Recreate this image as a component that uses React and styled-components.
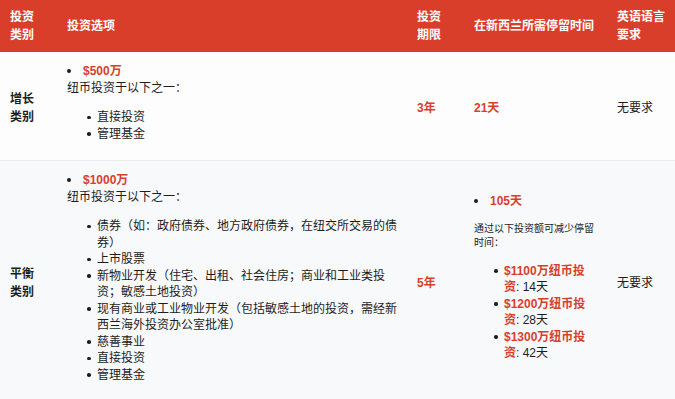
import React from "react";
import styled, { createGlobalStyle } from "styled-components";

const GlobalStyle = createGlobalStyle`
  body {
    margin: 0;
    background: #ffffff;
    font-family: "Liberation Sans", "Noto Sans CJK SC", sans-serif;
    color: #1d1d1d;
    text-spacing-trim: space-all;
  }
`;

const Table = styled.table`
  width: 675px;
  border-collapse: separate;
  border-spacing: 0;
  table-layout: fixed;
  font-size: 12px;
`;

const Th = styled.th`
  background-color: #d93e2b;
  color: #ffffff;
  font-weight: 700;
  text-align: left;
  vertical-align: middle;
  line-height: 18px;
  padding: 8px ${(p) => p.$right || 10}px 8px 10px;
`;

const Row = styled.tr`
  background-color: ${(p) => (p.$shaded ? "#f8f9fa" : "#fdfdfd")};
`;

const Td = styled.td`
  vertical-align: middle;
  line-height: 16.5px;
  padding: 11px ${(p) => p.$right || 10}px 7px 10px;
  border-top: ${(p) => (p.$divided ? "1px solid #ebebeb" : "none")};
`;

const Label = styled.div`
  font-weight: 700;
  line-height: 18px;
`;

const Red = styled.span`
  color: #d93f2b;
  font-weight: 700;
`;

const Lead = styled.div`
  position: relative;
  padding-left: 16px;
  &::before {
    content: "";
    position: absolute;
    left: 0;
    top: 6px;
    width: 4px;
    height: 4px;
    border-radius: 50%;
    background: #1d1d1d;
  }
`;

const Intro = styled.div``;

const Note = styled.p`
  margin: 12px 0;
  font-size: 10px;
  line-height: 14px;
`;

const SubList = styled.ul`
  list-style: none;
  margin: 13px 0 11px;
  padding: 0 0 0 30px;
`;

const SubItem = styled.li`
  position: relative;
  &::before {
    content: "";
    position: absolute;
    left: -10px;
    top: 6.5px;
    width: 3.5px;
    height: 3.5px;
    border-radius: 50%;
    background: #1d1d1d;
  }
`;

const growthOptions = ["直接投资", "管理基金"];

const balancedOptions = [
  "债券（如：政府债券、地方政府债券，在纽交所交易的债券）",
  "上市股票",
  "新物业开发（住宅、出租、社会住房；商业和工业类投资；敏感土地投资）",
  "现有商业或工业物业开发（包括敏感土地的投资，需经新西兰海外投资办公室批准）",
  "慈善事业",
  "直接投资",
  "管理基金",
];

const reductions = [
  { amount: "$1100万纽币投资", days: "14天" },
  { amount: "$1200万纽币投资", days: "28天" },
  { amount: "$1300万纽币投资", days: "42天" },
];

export default function App() {
  return (
    <>
      <GlobalStyle />
      <Table>
        <colgroup>
          <col style={{ width: 57 }} />
          <col style={{ width: 350 }} />
          <col style={{ width: 57 }} />
          <col style={{ width: 143 }} />
          <col style={{ width: 68 }} />
        </colgroup>
        <thead>
          <tr>
            <Th $right={18}>投资类别</Th>
            <Th $right={8}>投资选项</Th>
            <Th $right={18}>投资期限</Th>
            <Th $right={8}>在新西兰所需停留时间</Th>
            <Th $right={6}>英语语言要求</Th>
          </tr>
        </thead>
        <tbody>
          <Row>
            <Td $right={18}>
              <Label>增长类别</Label>
            </Td>
            <Td $right={8}>
              <Lead>
                <Red>$500万</Red>
              </Lead>
              <Intro>纽币投资于以下之一：</Intro>
              <SubList>
                {growthOptions.map((o) => (
                  <SubItem key={o}>{o}</SubItem>
                ))}
              </SubList>
            </Td>
            <Td $right={18}>
              <Red>3年</Red>
            </Td>
            <Td>
              <Red>21天</Red>
            </Td>
            <Td $right={6}>无要求</Td>
          </Row>
          <Row $shaded>
            <Td $divided $right={18}>
              <Label>平衡类别</Label>
            </Td>
            <Td $divided $right={8}>
              <Lead>
                <Red>$1000万</Red>
              </Lead>
              <Intro>纽币投资于以下之一：</Intro>
              <SubList>
                {balancedOptions.map((o) => (
                  <SubItem key={o}>{o}</SubItem>
                ))}
              </SubList>
            </Td>
            <Td $divided $right={18}>
              <Red>5年</Red>
            </Td>
            <Td $divided>
              <Lead>
                <Red>105天</Red>
              </Lead>
              <Note>通过以下投资额可减少停留时间：</Note>
              <SubList>
                {reductions.map((r) => (
                  <SubItem key={r.amount}>
                    <Red>{r.amount}</Red>: {r.days}
                  </SubItem>
                ))}
              </SubList>
            </Td>
            <Td $divided $right={6}>
              无要求
            </Td>
          </Row>
        </tbody>
      </Table>
    </>
  );
}
